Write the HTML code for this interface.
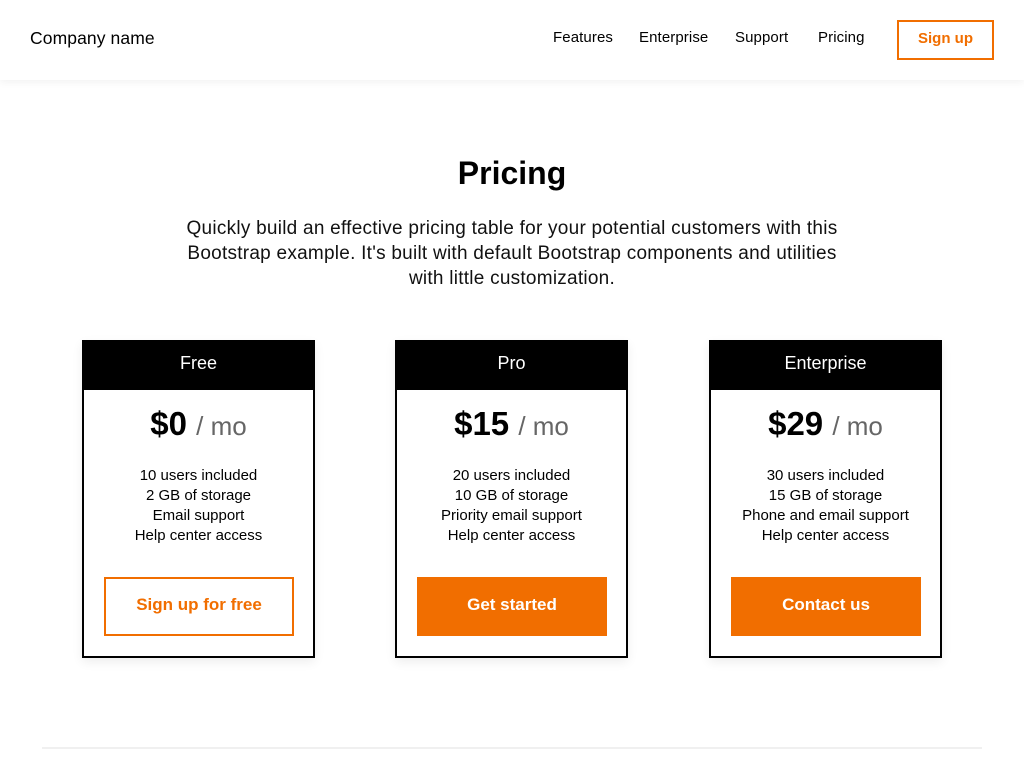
<!DOCTYPE html>
<html><head><meta charset="utf-8"><style>
*{margin:0;padding:0;box-sizing:border-box}
body{width:1024px;height:768px;overflow:hidden;background:#fff;font-family:"Liberation Sans",Arial,sans-serif;color:#000;position:relative}
.hdr{position:absolute;left:0;top:0;width:1024px;height:80px;background:#fff;box-shadow:0 2px 8px rgba(0,0,0,.06);z-index:2}
.brand{position:absolute;left:30px;top:28px;font-size:17.5px;letter-spacing:.1px}
.nav a{position:absolute;top:29px;font-size:15px;color:#000;text-decoration:none;letter-spacing:.1px}
.hbtn{position:absolute;left:897px;top:20px;width:97px;height:40px;border:2px solid #f16e00;color:#f16e00;font-weight:bold;font-size:15px;text-align:center;line-height:34px}
h1{position:absolute;top:155px;left:0;width:1024px;text-align:center;font-size:32px;font-weight:bold}
.lead{position:absolute;top:216px;left:0;width:1024px;text-align:center;font-size:19px;letter-spacing:.25px;line-height:25px;white-space:nowrap;color:#111}
.card{position:absolute;top:340px;width:233px;height:318px;border:2px solid #000;box-shadow:0 4px 10px rgba(0,0,0,.07);text-align:center;background:#fff}
.ch{height:48px;background:#000;color:#fff;font-size:18px;line-height:42px}
.price{margin-top:14px;font-size:33px;font-weight:bold;line-height:40px}
.price span{font-weight:normal;color:#666;font-size:26px}
.feat{margin-top:20px;font-size:15px;line-height:20px}
.btn{position:absolute;left:20px;top:235px;width:190px;height:59px;font-weight:bold;font-size:17px;line-height:51px;border:2px solid #f16e00}
.o{color:#f16e00;background:#fff}
.f{background:#f16e00;color:#fff}
.hr{position:absolute;left:42px;top:747px;width:940px;height:2px;background:#f0f0f0}
</style></head><body>
<div class="hdr">
<div class="brand">Company name</div>
<div class="nav"><a style="left:553px">Features</a><a style="left:639px">Enterprise</a><a style="left:735px">Support</a><a style="left:818px">Pricing</a></div>
<div class="hbtn">Sign up</div>
</div>
<h1>Pricing</h1>
<div class="lead">Quickly build an effective pricing table for your potential customers with this<br>Bootstrap example. It's built with default Bootstrap components and utilities<br>with little customization.</div>
<div class="card" style="left:82px"><div class="ch">Free</div><div class="price">$0 <span>/ mo</span></div><div class="feat">10 users included<br>2 GB of storage<br>Email support<br>Help center access</div><div class="btn o">Sign up for free</div></div>
<div class="card" style="left:395px"><div class="ch">Pro</div><div class="price">$15 <span>/ mo</span></div><div class="feat">20 users included<br>10 GB of storage<br>Priority email support<br>Help center access</div><div class="btn f">Get started</div></div>
<div class="card" style="left:709px"><div class="ch">Enterprise</div><div class="price">$29 <span>/ mo</span></div><div class="feat">30 users included<br>15 GB of storage<br>Phone and email support<br>Help center access</div><div class="btn f">Contact us</div></div>
<div class="hr"></div>
</body></html>
